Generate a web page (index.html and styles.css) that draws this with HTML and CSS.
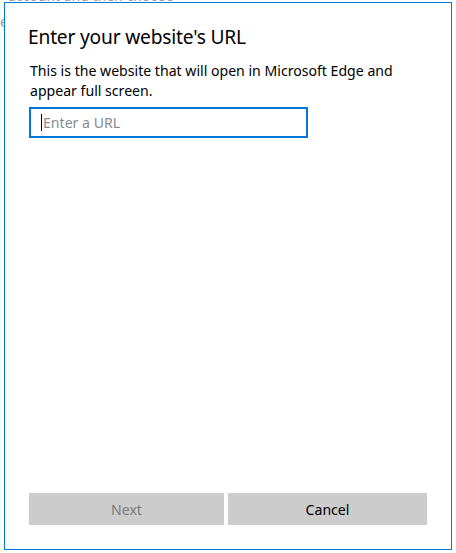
FILE: index.html
```html
<!DOCTYPE html>
<html>
<head>
<meta charset="utf-8">
<link rel="stylesheet" href="styles.css">
</head>
<body>
<div class="page">
  <p class="bg-line first">account and then choose</p>
  <p class="bg-line second">choose</p>
</div>
<div class="dialog">
  <h1 class="title">Enter your website's URL</h1>
  <p class="desc">This is the website that will open in Microsoft Edge and appear full screen.</p>
  <div class="field"><span class="caret"></span><span class="placeholder">Enter a URL</span></div>
  <div class="spacer"></div>
  <div class="buttons">
    <button class="btn btn-next" disabled>Next</button>
    <button class="btn btn-cancel">Cancel</button>
  </div>
</div>
</body>
</html>
```
FILE: styles.css
```css
html, body {
  margin: 0;
  padding: 0;
  background: #ffffff;
  width: 456px;
  height: 553px;
  overflow: hidden;
  font-family: "Noto Sans", "Open Sans", sans-serif;
}
.page {
  padding-left: 8px;
}
.bg-line {
  margin: 0;
  color: #9a9a9a;
  font-size: 14px;
  line-height: 20px;
}
.bg-line.first {
  margin-top: -14px;
}
.bg-line.second {
  margin-top: 6px;
  margin-left: -47px;
}
.dialog {
  position: absolute;
  left: 4px;
  top: 2px;
  width: 446px;
  height: 546px;
  border: 1px solid #0078d7;
  background: #ffffff;
  box-sizing: content-box;
  display: flex;
  flex-direction: column;
  padding: 0;
}
.title {
  margin: 20px 0 0 23px;
  font-size: 19.2px;
  letter-spacing: -0.2px;
  font-weight: 400;
  line-height: 28px;
  color: #000000;
}
.desc {
  margin: 10px 0 0 25px;
  width: 380px;
  font-size: 14.1px;
  line-height: 20px;
  color: #000000;
}
.field {
  margin: 6px 0 0 24px;
  width: 265px;
  height: 27px;
  border: 2px solid #0078d7;
  display: flex;
  align-items: center;
  padding-left: 10px;
  box-sizing: content-box;
}
.caret {
  width: 1px;
  height: 17px;
  background: #000;
  margin-right: 1px;
}
.placeholder {
  color: #8a8a8a;
  font-size: 14.1px;
}
.spacer {
  flex: 1;
}
.buttons {
  display: flex;
  gap: 4px;
  margin: 0 0 24px 24px;
}
.btn {
  height: 32px;
  border: none;
  background: #cccccc;
  font-family: inherit;
  font-size: 14.1px;
  padding: 0;
}
.btn-next {
  width: 195px;
  color: #7a7a7a;
}
.btn-cancel {
  width: 199px;
  color: #000000;
}
```
